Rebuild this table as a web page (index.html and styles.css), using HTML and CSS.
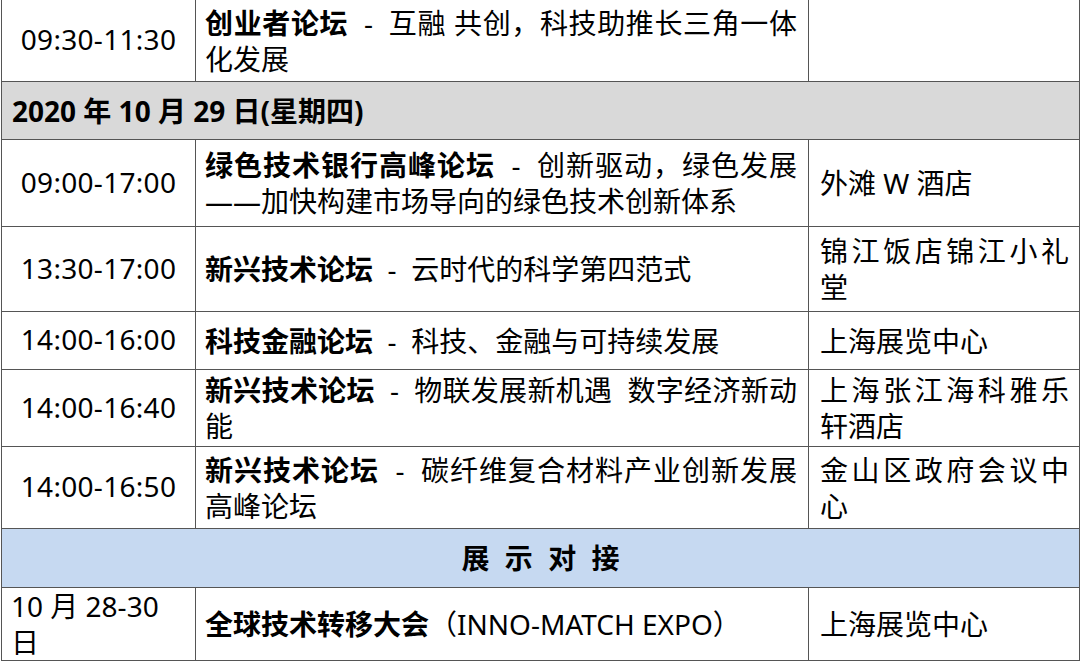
FILE: index.html
```html
<!DOCTYPE html>
<html lang="zh-CN">
<head>
<meta charset="utf-8">
<title>日程</title>
<link rel="stylesheet" href="styles.css">
</head>
<body>
<table class="schedule">
  <colgroup>
    <col class="c-time">
    <col class="c-topic">
    <col class="c-place">
  </colgroup>
  <tr class="r-a">
    <td class="time">09:30-11:30</td>
    <td class="topic"><b>创业者论坛</b>&nbsp;&nbsp;-&nbsp;&nbsp;互融 共创，科技助推长三角一体化发展</td>
    <td class="place"></td>
  </tr>
  <tr class="r-day">
    <td class="day" colspan="3">2020 年 10 月 29 日(星期四)</td>
  </tr>
  <tr class="r-b">
    <td class="time">09:00-17:00</td>
    <td class="topic"><b>绿色技术银行高峰论坛</b>&nbsp;&nbsp;-&nbsp;&nbsp;创新驱动，绿色发展——加快构建市场导向的绿色技术创新体系</td>
    <td class="place">外滩 W 酒店</td>
  </tr>
  <tr class="r-c">
    <td class="time">13:30-17:00</td>
    <td class="topic"><b>新兴技术论坛</b>&nbsp;&nbsp;-&nbsp;&nbsp;云时代的科学第四范式</td>
    <td class="place">锦江饭店锦江小礼堂</td>
  </tr>
  <tr class="r-d">
    <td class="time">14:00-16:00</td>
    <td class="topic"><b>科技金融论坛</b>&nbsp;&nbsp;-&nbsp;&nbsp;科技、金融与可持续发展</td>
    <td class="place">上海展览中心</td>
  </tr>
  <tr class="r-e">
    <td class="time">14:00-16:40</td>
    <td class="topic"><b>新兴技术论坛</b>&nbsp;&nbsp;-&nbsp;&nbsp;物联发展新机遇&nbsp; 数字经济新动能</td>
    <td class="place">上海张江海科雅乐轩酒店</td>
  </tr>
  <tr class="r-f">
    <td class="time">14:00-16:50</td>
    <td class="topic"><b>新兴技术论坛</b>&nbsp;&nbsp;-&nbsp;&nbsp;碳纤维复合材料产业创新发展高峰论坛</td>
    <td class="place">金山区政府会议中心</td>
  </tr>
  <tr class="r-sec">
    <td class="section" colspan="3">展 示 对 接</td>
  </tr>
  <tr class="r-g">
    <td class="time time-left">10 月 28-30<br>日</td>
    <td class="topic"><b>全球技术转移大会</b>（INNO-MATCH EXPO）</td>
    <td class="place">上海展览中心</td>
  </tr>
</table>
</body>
</html>
```

FILE: styles.css
```css
html, body {
  margin: 0;
  padding: 0;
  background: #ffffff;
}

body {
  font-family: "Noto Sans", "Noto Sans CJK SC", sans-serif;
  font-size: 28px;
  line-height: 36px;
  color: #000000;
  overflow: hidden;
}

.schedule {
  border-collapse: collapse;
  table-layout: fixed;
  width: 1078px;
  margin: -1px 0 0 1px;
}

.c-time { width: 194px; }
.c-topic { width: 613px; }
.c-place { width: 271px; }

.schedule td {
  border: 1px solid #555555;
  vertical-align: middle;
  padding: 0;
}

.schedule b {
  font-weight: 700;
}

.time {
  text-align: center;
  letter-spacing: 0.3px;
  padding-bottom: 3px !important;
}

.time-left {
  text-align: left;
  letter-spacing: 0;
  padding-left: 9px !important;
  padding-bottom: 0 !important;
}

.topic {
  text-align: justify;
  padding: 0 11px 0 9px !important;
}

.place {
  text-align: justify;
  padding: 0 10px 0 11px !important;
}

.day {
  background: #d9d9d9;
  font-weight: 700;
  padding-left: 10px !important;
}

.section {
  background: #c6d9f1;
  font-weight: 700;
  text-align: center;
  word-spacing: 8px;
}

.r-a { height: 82px; }
.r-day { height: 58px; }
.r-b { height: 87px; }
.r-c { height: 85px; }
.r-d { height: 58px; }
.r-e { height: 77px; }
.r-f { height: 82px; }
.r-sec { height: 59px; }
.r-g { height: 73px; }
```
